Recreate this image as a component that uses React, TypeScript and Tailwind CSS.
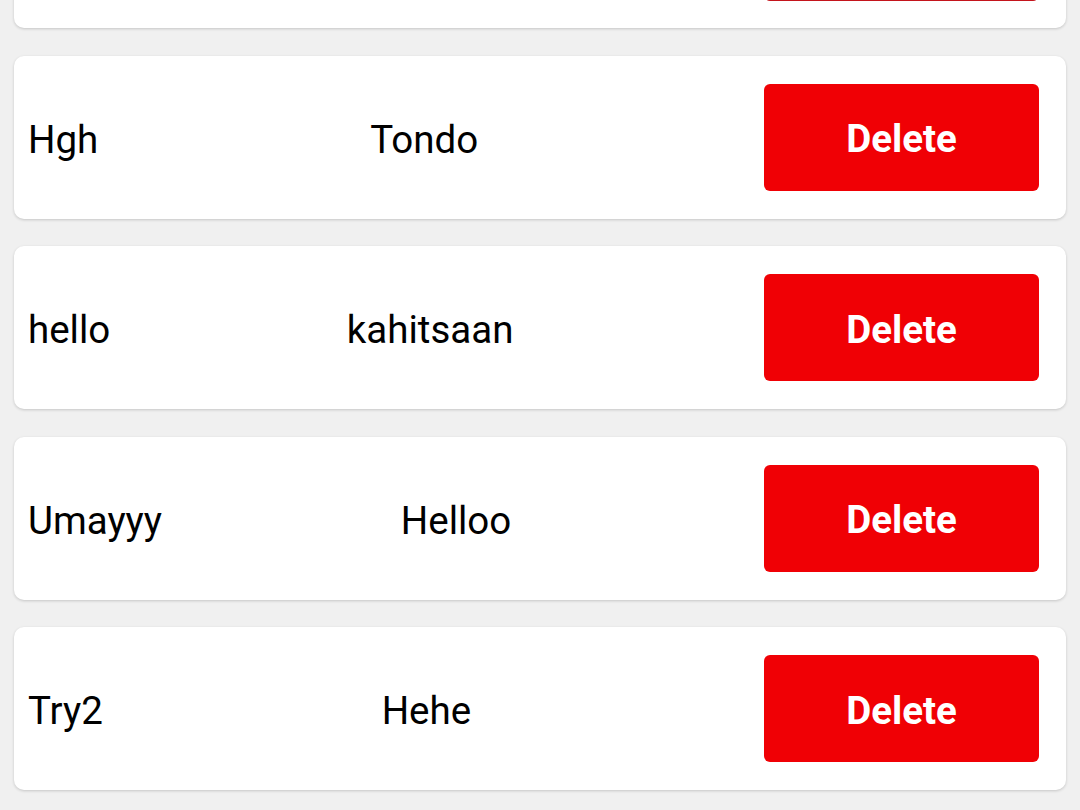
import React from "react";

const rows = [
  { a: "", b: "", btn: "" },
  { a: "Hgh", b: "Tondo", btn: "Delete" },
  { a: "hello", b: "kahitsaan", btn: "Delete" },
  { a: "Umayyy", b: "Helloo", btn: "Delete" },
  { a: "Try2", b: "Hehe", btn: "Delete" },
];

export default function App() {
  return (
    <div
      className="w-[1080px] h-[810px] overflow-hidden bg-[#f0f0f0]"
      style={{ fontFamily: "Roboto, 'Noto Sans', sans-serif" }}
    >
      <div className="mt-[-135px] flex flex-col gap-[27.5px] px-[14px]">
        {rows.map((r, i) => (
          <div
            key={i}
            className="h-[163px] bg-white rounded-[10px] shadow-[0_1px_3px_rgba(0,0,0,0.18)] flex items-center justify-between pl-[14px] pr-[27px]"
          >
            <span className="mt-[6px] text-[38.5px] text-black leading-none">{r.a}</span>
            <span className="mt-[6px] mr-[14px] text-[38.5px] text-black leading-none">{r.b}</span>
            <button
              className={
                i === 0
                  ? "w-[275px] h-[107px] mb-[-2px] rounded-[6px] bg-[#c4141c] text-white text-[38.5px] font-bold leading-none pt-[5px]"
                  : "w-[275px] h-[107px] rounded-[6px] bg-[#f00005] text-white text-[38.5px] font-bold leading-none pt-[5px]"
              }
            >
              {r.btn}
            </button>
          </div>
        ))}
      </div>
    </div>
  );
}
